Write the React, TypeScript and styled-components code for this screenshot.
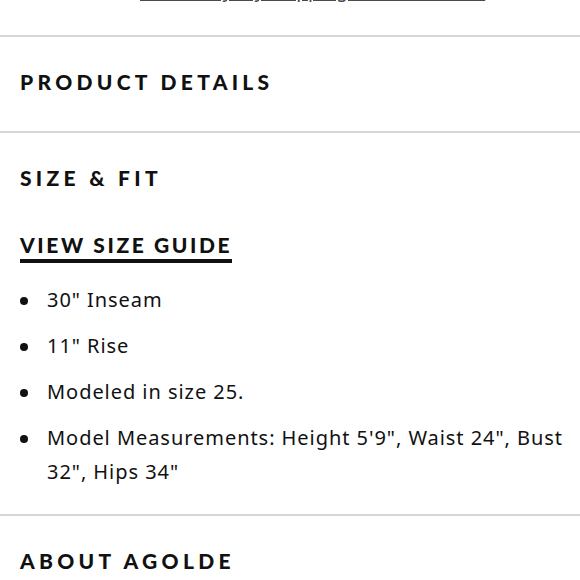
import React from "react";
import styled, { createGlobalStyle } from "styled-components";

const GlobalStyle = createGlobalStyle`
  body {
    margin: 0;
    background: #ffffff;
    color: #111111;
    font-family: "Noto Sans", sans-serif;
  }
`;

const Page = styled.div`
  width: 580px;
  height: 580px;
  overflow: hidden;
  background: #ffffff;
`;

const ShippingNote = styled.div`
  margin-top: -20px;
  height: 55px;
  padding-left: 140px;
  font-family: "Noto Sans", sans-serif;
  font-size: 19px;
  line-height: 20px;
  color: #4a4a4a;
`;

const ShippingLink = styled.a`
  color: inherit;
  text-decoration: underline;
  text-decoration-thickness: 2px;
  text-underline-offset: 2px;
`;

const Section = styled.section`
  border-top: 2px solid #d6d6d6;
  padding: 0 8px 0 20px;
`;

const Heading = styled.h2<{ $tight?: boolean }>`
  margin: 0;
  padding: 32px 0 ${(p) => (p.$tight ? 0 : 36)}px;
  font-family: "Lato", sans-serif;
  font-weight: 900;
  font-size: 21px;
  line-height: 26px;
  letter-spacing: 4.3px;
  text-transform: uppercase;
  color: #111111;
`;

const SizeGuideLink = styled.a`
  display: inline-block;
  margin-top: 42px;
  padding-bottom: 2px;
  border-bottom: 4px solid #111111;
  font-family: "Lato", sans-serif;
  font-weight: 900;
  font-size: 21px;
  line-height: 24px;
  letter-spacing: 2.6px;
  color: #111111;
  text-decoration: none;
`;

const List = styled.ul`
  list-style: none;
  margin: 20px 0 0;
  padding: 0 0 25px;
  display: flex;
  flex-direction: column;
  gap: 12px;
`;

const Item = styled.li`
  display: flex;
  align-items: flex-start;
  gap: 19px;
  font-family: "Noto Sans", sans-serif;
  font-size: 20px;
  line-height: 34px;
  letter-spacing: 0.95px;
  color: #111111;
`;

const Dot = styled.span`
  flex: none;
  width: 8px;
  height: 8px;
  margin-top: 14px;
  border-radius: 50%;
  background: #111111;
`;

const details = [
  `30" Inseam`,
  `11" Rise`,
  `Modeled in size 25.`,
  `Model Measurements: Height 5'9", Waist 24", Bust 32", Hips 34"`,
];

export default function App() {
  return (
    <Page>
      <GlobalStyle />
      <ShippingNote>
        <ShippingLink href="#">Free Everyday Shipping &amp; Free Returns</ShippingLink>
      </ShippingNote>
      <Section>
        <Heading>Product Details</Heading>
      </Section>
      <Section>
        <Heading $tight>Size &amp; Fit</Heading>
        <SizeGuideLink href="#">VIEW SIZE GUIDE</SizeGuideLink>
        <List>
          {details.map((d) => (
            <Item key={d}>
              <Dot />
              <span>{d}</span>
            </Item>
          ))}
        </List>
      </Section>
      <Section>
        <Heading>About Agolde</Heading>
      </Section>
    </Page>
  );
}
